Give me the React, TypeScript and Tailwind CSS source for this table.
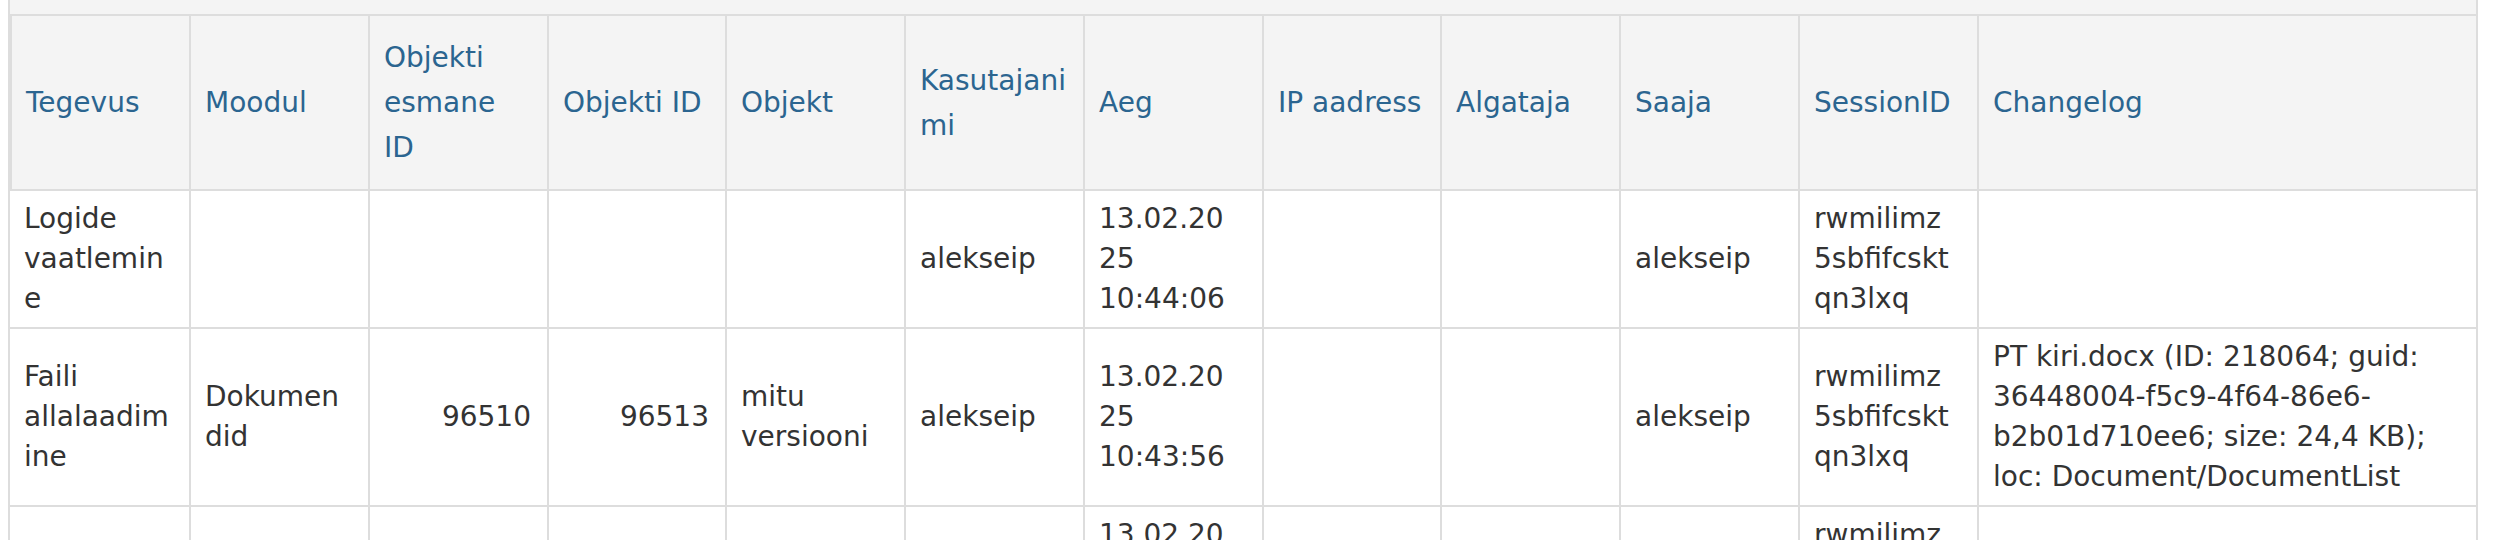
import React from "react";

type Row = {
  tegevus: string;
  moodul: string;
  esmaneId: string;
  objektiId: string;
  objekt: string;
  kasutaja: string;
  aeg: string;
  ip: string;
  algataja: string;
  saaja: string;
  session: string;
  changelog: string;
};

const columns: { label: string; width: string; right?: boolean }[] = [
  { label: "Tegevus", width: "w-[181px]" },
  { label: "Moodul", width: "w-[179px]" },
  { label: "Objekti\nesmane\nID", width: "w-[179px]", right: true },
  { label: "Objekti ID", width: "w-[178px]", right: true },
  { label: "Objekt", width: "w-[179px]" },
  { label: "Kasutajani\nmi", width: "w-[179px]" },
  { label: "Aeg", width: "w-[179px]" },
  { label: "IP aadress", width: "w-[178px]" },
  { label: "Algataja", width: "w-[179px]" },
  { label: "Saaja", width: "w-[179px]" },
  { label: "SessionID", width: "w-[179px]" },
  { label: "Changelog", width: "w-auto" },
];

const rows: Row[] = [
  {
    tegevus: "Logide\nvaatlemin\ne",
    moodul: "",
    esmaneId: "",
    objektiId: "",
    objekt: "",
    kasutaja: "alekseip",
    aeg: "13.02.20\n25\n10:44:06",
    ip: "",
    algataja: "",
    saaja: "alekseip",
    session: "rwmilimz\n5sbfifcskt\nqn3lxq",
    changelog: "",
  },
  {
    tegevus: "Faili\nallalaadim\nine",
    moodul: "Dokumen\ndid",
    esmaneId: "96510",
    objektiId: "96513",
    objekt: "mitu\nversiooni",
    kasutaja: "alekseip",
    aeg: "13.02.20\n25\n10:43:56",
    ip: "",
    algataja: "",
    saaja: "alekseip",
    session: "rwmilimz\n5sbfifcskt\nqn3lxq",
    changelog:
      "PT kiri.docx (ID: 218064; guid:\n36448004-f5c9-4f64-86e6-\nb2b01d710ee6; size: 24,4 KB);\nloc: Document/DocumentList",
  },
  {
    tegevus: "Dokumendi\nvaatamine",
    moodul: "",
    esmaneId: "",
    objektiId: "",
    objekt: "",
    kasutaja: "alekseip",
    aeg: "13.02.20\n25\n10:43:41",
    ip: "",
    algataja: "",
    saaja: "alekseip",
    session: "rwmilimz\n5sbfifcskt\nqn3lxq",
    changelog: "",
  },
];

export default function App() {
  return (
    <div className="min-h-screen bg-white font-['DejaVu_Sans',sans-serif] text-[28px]">
      <div className="ml-2 w-[2470px] border-x-2 border-[#dddddd]">
        {/* toolbar strip above the grid */}
        <div className="h-[16px] border-b-2 border-[#dddddd] bg-[#f4f4f4]" />
        <table className="w-full table-fixed border-separate border-spacing-0">
          <colgroup>
            {columns.map((c) => (
              <col key={c.label} className={c.width} />
            ))}
          </colgroup>
          <thead>
            <tr>
              {columns.map((c, i) => (
                <th
                  key={c.label}
                  className={`whitespace-pre border-b-2 border-[#dddddd] bg-[#f4f4f4] py-[19px] pl-[14px] pr-[16px] text-left align-middle font-normal leading-[45px] text-[#2b6590] ${
                    i === 0 ? "border-l-2 pl-[12px]" : ""
                  } ${i < columns.length - 1 ? "border-r-2" : ""}`}
                >
                  {c.label}
                </th>
              ))}
            </tr>
          </thead>
          <tbody>
            {rows.map((r, idx) => {
              const cells = [
                r.tegevus,
                r.moodul,
                r.esmaneId,
                r.objektiId,
                r.objekt,
                r.kasutaja,
                r.aeg,
                r.ip,
                r.algataja,
                r.saaja,
                r.session,
                r.changelog,
              ];
              return (
                <tr key={idx}>
                  {cells.map((v, i) => (
                    <td
                      key={i}
                      className={`whitespace-pre border-b-2 border-[#dddddd] bg-white py-2 pl-[14px] pr-[16px] align-middle leading-[40px] text-[#333333] ${
                        columns[i].right ? "text-right" : "text-left"
                      } ${i < cells.length - 1 ? "border-r-2" : ""}`}
                    >
                      {v}
                    </td>
                  ))}
                </tr>
              );
            })}
          </tbody>
        </table>
      </div>
    </div>
  );
}
